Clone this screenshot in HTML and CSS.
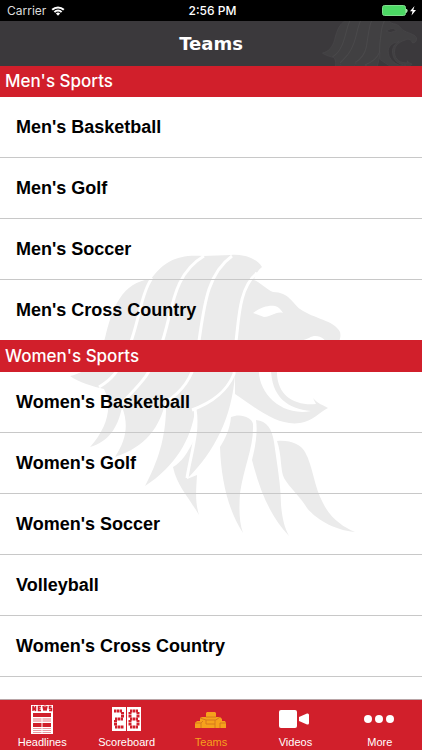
FILE: index.html
```html
<!DOCTYPE html>
<html lang="en">
<head>
    <meta charset="UTF-8">
    <meta name="viewport" content="width=device-width, initial-scale=1.0">
    <title>Teams</title>
    <link rel="stylesheet" href="styles.css">
</head>
<body>
    <!-- Lion logo, shared by the header and the list background -->
    <svg class="defs" aria-hidden="true">
        <defs>
            <g id="lion">
                <path d="M70 376 C89 372 99 358 105 338 C112 308 122 282 151 279 C164 261 178 254 203 256 L231 255 C245 254 257 259 262 267 C258 270 255 275 254 280 C260 282 267 290 273 292 C289 292 293 304 300 309 C314 319 334 320 340 332 C342 340 337 347 329 347 C326 338 317 333 309 338 C287 346 277 354 277 374 C278 396 295 406 316 404 L313 398 C318 404 323 405 328 408 C318 413 313 421 300 423 C278 426 260 411 235 394 L235 374 C232 418 214 452 188 478 C190 461 197 440 195 410 C192 438 175 467 145 486 C158 461 167 436 166 400 C160 428 145 447 115 457 C126 440 129 425 122 407 C118 428 108 442 90 447 C107 428 113 407 104 389 C94 387 78 382 70 376 Z"/>
                <path d="M173 467 C182 462 188 452 194 440 C190 457 188 470 187 479 L197 475 C196 492 195 502 199 515 C190 499 177 486 173 467 Z"/>
                <path d="M231 417 C240 413 252 417 253 424 C254 447 244 466 240 493 C239 508 239 522 243 533 C229 512 221 481 220 447 C225 439 230 429 231 417 Z"/>
                <path d="M256 420 C267 421 272 429 274 442 C277 464 281 486 281 505 C282 516 284 527 289 536 C270 516 260 491 252 460 C255 448 258 433 256 420 Z"/>
                <path d="M277 441 C291 440 300 444 305 452 C313 466 314 487 323 503 C330 518 343 527 355 532 C333 530 315 518 307 508 C299 495 289 487 284 478 C280 469 282 455 277 441 Z"/>
                <path class="gap-fill" d="M253 313 C261 307 269 305 275 306 C279 307 281 310 283 313 C276 311 271 317 264 317 Z"/>
                <path class="gap-fill" d="M259 368 C257 391 280 417 311 411 C288 409 271 397 271 368 C273 355 281 347 290 343 C274 345 261 354 259 368 Z"/>
                <g class="gap">
                    <path d="M152 278 C140 295 138 330 126 354 C119 371 111 380 99 387"/>
                    <path d="M204 256 C170 276 173 316 160 348 C150 376 139 385 121 404"/>
                    <path d="M232 256 C203 277 204 316 196 359 C192 379 180 393 166 402"/>
                    <path d="M257 273 C237 289 239 327 235 348 L234 374 C226 393 211 403 192 410"/>
                    <path d="M195 409 C199 433 190 457 187 478"/>
                </g>
            </g>
        </defs>
    </svg>

    <div class="status-bar">
        <div class="carrier">
            <span>Carrier</span>
            <svg class="wifi" viewBox="0 0 14 10" aria-hidden="true">
                <path d="M1.2 3.8 A8.2 8.2 0 0 1 12.8 3.8"/>
                <path d="M3.4 6.1 A5 5 0 0 1 10.6 6.1"/>
                <path class="solid" d="M4.9 7.5 A3 3 0 0 1 9.1 7.5 L7 9.7 Z"/>
            </svg>
        </div>
        <span class="time">2:56 PM</span>
        <div class="battery">
            <svg viewBox="0 0 36 12" aria-hidden="true">
                <rect x="0.5" y="0.5" width="23" height="10" rx="2" fill="#4cd964" stroke="#7fdc8c"/>
                <path d="M24.5 4 Q26 5.500 24.500 7.500 Z" fill="#9fdfa9" stroke="#9fdfa9"/>
                <path d="M32.500 1 L28 6.300 H30.500 L29.500 10.500 L34 5 H31.300 Z" fill="#fff"/>
            </svg>
        </div>
    </div>

    <header class="nav-bar">
        <h1>Teams</h1>
        <svg class="nav-lion" viewBox="66 284 290 129" aria-hidden="true"><use href="#lion"/></svg>
    </header>

    <main class="content">
        <svg class="watermark" viewBox="66 225 290 316" aria-hidden="true"><use href="#lion"/></svg>
        <div class="team-list">
            <section>
                <h2>Men's Sports</h2>
                <ul>
                    <li><a href="#">Men's Basketball</a></li>
                    <li><a href="#">Men's Golf</a></li>
                    <li><a href="#">Men's Soccer</a></li>
                    <li><a href="#">Men's Cross Country</a></li>
                </ul>
            </section>
            <section>
                <h2>Women's Sports</h2>
                <ul>
                    <li><a href="#">Women's Basketball</a></li>
                    <li><a href="#">Women's Golf</a></li>
                    <li><a href="#">Women's Soccer</a></li>
                    <li><a href="#">Volleyball</a></li>
                    <li><a href="#">Women's Cross Country</a></li>
                </ul>
            </section>
        </div>
    </main>

    <nav class="tab-bar">
        <a href="#">
            <svg viewBox="0 0 32 32" aria-hidden="true">
                <rect x="5" y="2" width="22" height="29" fill="#fff"/>
                <!-- masthead -->
                <g fill="none" stroke="#d11f2b" stroke-width="1.500">
                    <path d="M7 8 V3 L9.500 8 V3"/>
                    <path d="M15 3.500 H12.500 V7.500 H15 M12.500 5.500 H14.500"/>
                    <path d="M17 3 L18 7.500 L19 4 L20 7.500 L21 3"/>
                    <path d="M25.500 3.500 H23.500 V5.500 H25.500 V7.500 H23"/>
                </g>
                <rect x="7" y="10" width="18" height="4" fill="#d11f2b"/>
                <rect x="7" y="15" width="18" height="4" fill="#f3b9bd"/>
                <rect x="7" y="20" width="18" height="4" fill="#d11f2b"/>
                <path d="M7 25.500 H25 M7 27.500 H25 M7 29.500 H25" stroke="#eb98a0"/>
                <path d="M16 15 V31" stroke="#fff"/>
            </svg>
            <span>Headlines</span>
        </a>
        <a href="#">
            <svg viewBox="0 0 32 32" aria-hidden="true">
                <rect x="1" y="4" width="14" height="24" fill="#fff"/>
                <rect x="16" y="4" width="14" height="24" fill="#fff"/>
                <g fill="none" stroke="#d11f2b" stroke-width="3" stroke-dasharray="2.500 0.500">
                    <path d="M3 8 H11"/>
                    <path d="M11.500 9 V15"/>
                    <path d="M12 16 H4"/>
                    <path d="M4.500 17 V23"/>
                    <path d="M4 24 H13"/>
                    <path d="M19 8 H27 M19 16 H27 M19 24 H27"/>
                    <path d="M19 9 V15 M27 9 V15 M19 17 V23 M27 17 V23"/>
                </g>
            </svg>
            <span>Scoreboard</span>
        </a>
        <a href="#" class="active">
            <svg viewBox="0 0 32 32" aria-hidden="true">
                <path d="M0 25 V20 L2 18 H5 V15 L7 14 H11 V10 L12 9 H20 L21 10 V14 H25 L27 16 V18 H30 L31 20 V25 Z" fill="#f6a11c"/>
                <path d="M0 20 H6 L8 18 M5 15 L11 17 H21 L25 14 M11 14 H21 M6 20 V25 M11 17 V21 H20 V17 M20 21 V25 M25 20 H31 M25 20 V25" fill="none" stroke="#d6791d"/>
            </svg>
            <span>Teams</span>
        </a>
        <a href="#">
            <svg viewBox="0 0 32 32" aria-hidden="true">
                <rect x="0" y="7" width="18" height="18" rx="2" fill="#fff"/>
                <path d="M20 14 L28 10.500 Q30 10 30 12 V20 Q30 22 28 21.500 L20 18 Z" fill="#fff"/>
            </svg>
            <span>Videos</span>
        </a>
        <a href="#">
            <svg viewBox="0 0 32 32" aria-hidden="true">
                <circle cx="4" cy="16" r="4" fill="#fff"/>
                <circle cx="15" cy="16" r="4" fill="#fff"/>
                <circle cx="26" cy="16" r="4" fill="#fff"/>
            </svg>
            <span>More</span>
        </a>
    </nav>
</body>
</html>
```
FILE: styles.css
```css
/* General Styles */
* {
    box-sizing: border-box;
}

body {
    margin: 0;
    min-height: 100vh;
    display: flex;
    flex-direction: column;
    font-family: "Liberation Sans", Arial, sans-serif;
    background-color: #fff;
    color: #000;
}

a {
    color: inherit;
    text-decoration: none;
}

.defs {
    position: absolute;
    width: 0;
    height: 0;
}

/* Status Bar */
.status-bar {
    display: grid;
    grid-template-columns: 1fr auto 1fr;
    align-items: center;
    height: 21px;
    padding: 0 4px 0 7px;
    background: #000;
    color: #fff;
    font-family: Inter, sans-serif;
    font-size: 12px;
}

.carrier {
    display: flex;
    align-items: center;
    gap: 5px;
    color: #ddd;
}

.wifi {
    width: 14px;
    height: 10px;
    fill: none;
    stroke: #fff;
    stroke-width: 2;
}

.wifi .solid {
    fill: #fff;
    stroke: none;
}

.time {
    font-weight: 500;
}

.battery {
    display: flex;
    justify-content: flex-end;
}

.battery svg {
    width: 36px;
    height: 12px;
}

/* Header */
.nav-bar {
    display: grid;
    height: 45px;
    align-items: center;
    background: #3b393c;
    color: #fff;
}

.nav-bar h1 {
    grid-area: 1 / 1;
    margin: 0;
    text-align: center;
    font-family: "DejaVu Sans", Verdana, sans-serif;
    font-size: 18px;
    line-height: 24px;
}

.nav-lion {
    grid-area: 1 / 1;
    justify-self: end;
    width: 101px;
    height: 45px;
    fill: #414042;
    --gap: #4a494b;
    --gap-fill: #39373a;
    stroke: #484749;
    stroke-width: 2;
}

/* Team List */
.content {
    flex: 1;
    display: grid;
}

.watermark {
    grid-area: 1 / 1;
    place-self: center;
    width: 290px;
    height: 316px;
    fill: #ebebeb;
    --gap: #fff;
    --gap-fill: #fff;
}

.gap {
    fill: none;
    stroke: var(--gap);
    stroke-width: 3;
}

.gap-fill {
    fill: var(--gap-fill);
}

.team-list {
    grid-area: 1 / 1;
    z-index: 1;
    padding-bottom: 22px;
}

.team-list h2 {
    margin: 0;
    padding: 0 5px;
    background: #d11f2b;
    color: #fff;
    font-family: Inter, sans-serif;
    font-size: 17px;
    font-weight: 500;
    line-height: 31px;
}

.team-list ul {
    margin: 0;
    padding: 0;
    list-style: none;
}

.team-list a {
    display: block;
    padding: 0 16px;
    border-bottom: 1px solid #c8c8c8;
    font-size: 18px;
    font-weight: bold;
    line-height: 60px;
}

.team-list section:first-child li:last-child a {
    border-bottom-color: #d11f2b;
}

/* Tab Bar */
.tab-bar {
    display: flex;
    border-top: 1px solid #b9a5a7;
    background: #d11f2b;
    color: #fff;
    font-size: 11px;
    line-height: 14px;
}

.tab-bar a {
    flex: 1;
    display: flex;
    flex-direction: column;
    align-items: center;
    gap: 0;
    padding: 3px 0 1px;
}

.tab-bar svg {
    width: 32px;
    height: 32px;
}

.tab-bar .active {
    color: #f6a11c;
}
```
